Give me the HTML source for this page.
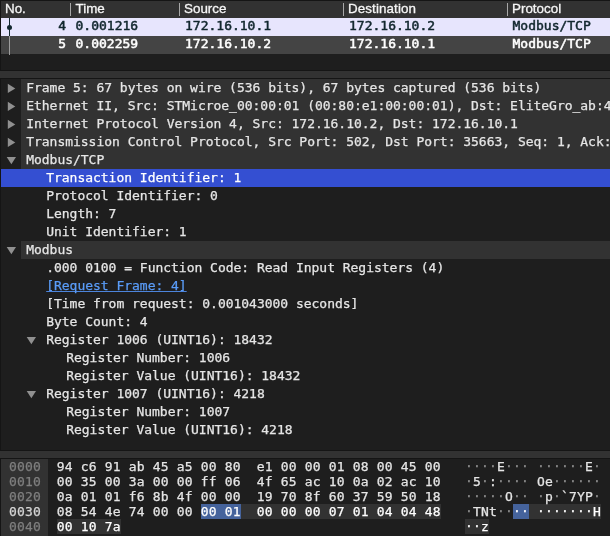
<!DOCTYPE html>
<html><head><meta charset="utf-8"><title>Wireshark Modbus/TCP</title>
<style>
html,body{margin:0;padding:0;background:#323232;}
body{will-change:transform;width:610px;height:536px;overflow:hidden;position:relative;font-family:"DejaVu Sans Mono","Liberation Mono",monospace;font-size:13px;color:#e6e6e6;}
.pane{position:absolute;left:0;width:610px;background:#1e1e1e;overflow:hidden;box-sizing:border-box;border-left:1px solid #151515;}
#list{top:0;height:71px;border-top:1px solid #151515;border-bottom:1px solid #151515;}
#hdr{position:absolute;left:0;top:0;width:610px;height:17px;background:#323232;font-family:"Liberation Sans",sans-serif;font-size:13.4px;color:#f6f6f6;-webkit-text-stroke:0.3px #f6f6f6;}
#hdr span{position:absolute;top:-1.4px;line-height:17px;white-space:nowrap;}
#hdr i{position:absolute;top:2px;width:1px;height:13px;background:#a8a8a8;}
.lr{position:absolute;left:0;width:610px;height:18px;line-height:18px;white-space:nowrap;}
.lr span{position:absolute;top:-1px;-webkit-text-stroke:0.5px currentColor;}
#r1{top:17px;background:#e7e5fd;color:#12272e;}
#r2{top:35px;background:#444444;color:#ffffff;}
#tree{top:78px;height:373px;border-top:1px solid #151515;border-bottom:1px solid #151515;}
.row{position:absolute;left:0;width:610px;height:18px;line-height:18px;white-space:nowrap;}
.row.top{background:#323232;}
.row.sel{background:#344fd2;color:#ffffff;}
.gut{position:absolute;left:0;top:0;width:20px;height:18px;background:#1e1e1e;}
.tx{position:absolute;top:0;letter-spacing:-0.022px;-webkit-text-stroke:0.25px currentColor;}
.ar{position:absolute;top:4px;fill:#909090;}
.ad{position:absolute;top:5px;fill:#909090;}
.lnk{color:#5a9cf8;text-decoration:underline;text-decoration-skip-ink:none;text-underline-offset:1px;text-decoration-thickness:1px;text-decoration-color:#4c84dc;}
#hex{top:458px;height:78px;border-top:1px solid #151515;}
#offbg{position:absolute;left:0;top:0;width:47px;height:80px;background:#323232;}
.hr{-webkit-text-stroke:0.25px currentColor;position:absolute;left:0;width:610px;height:15px;line-height:15px;white-space:pre;letter-spacing:0.174px;}
.hr span{position:absolute;top:0;height:15px;}
.of{left:8px;color:#7f7f7f;}
.of.cur{color:#d6d6d6;}
.h1{left:55.7px;} .h2{left:255.7px;} .a1{left:464px;} .a2{left:536px;}
b{font-weight:normal;}
u{text-decoration:none;color:#8e8e8e;position:relative;top:-0.6px;}
u.w{color:#ffffff;}
b.s{background:#45639c;color:#ffffff;}
b.w{color:#ffffff;}
.hl{position:absolute;background:#323232;height:15px;}
</style></head><body>
<div class="pane" id="list">
 <div id="hdr">
  <span style="left:4px">No.</span><i style="left:69px"></i>
  <span style="left:74.5px">Time</span><i style="left:178px"></i>
  <span style="left:183px">Source</span><i style="left:342px"></i>
  <span style="left:347px;letter-spacing:0.1px">Destination</span><i style="left:506px"></i>
  <span style="left:511px">Protocol</span>
 </div>
 <div class="lr" id="r1"><i style="position:absolute;left:8px;top:0;width:1px;height:18px;background:#12272e"></i><i style="position:absolute;left:6px;top:7px;width:5px;height:5px;border-radius:50%;background:#12272e"></i>
  <span style="left:0;width:65px;text-align:right">4</span><span style="left:74.5px">0.001216</span><span style="left:184px">172.16.10.1</span><span style="left:348px">172.16.10.2</span><span style="left:511.5px">Modbus/TCP</span></div>
 <div class="lr" id="r2"><i style="position:absolute;left:8px;top:0;width:1px;height:19px;background:#9c9c9c"></i>
  <span style="left:0;width:65px;text-align:right">5</span><span style="left:74.5px">0.002259</span><span style="left:184px">172.16.10.2</span><span style="left:348px">172.16.10.1</span><span style="left:511.5px">Modbus/TCP</span></div>
</div>
<div class="pane" id="tree">
<div class="row top" style="top:0px"><i class="gut"></i><svg class="ar" style="left:6px" width="10" height="12" viewBox="0 0 10 12"><path d="M0.8 0.8 L8.3 5.4 L0.8 10 Z"/></svg><span class="tx" style="left:25.2px">Frame 5: 67 bytes on wire (536 bits), 67 bytes captured (536 bits)</span></div>
<div class="row top" style="top:18px"><i class="gut"></i><svg class="ar" style="left:6px" width="10" height="12" viewBox="0 0 10 12"><path d="M0.8 0.8 L8.3 5.4 L0.8 10 Z"/></svg><span class="tx" style="left:25.2px">Ethernet II, Src: STMicroe_00:00:01 (00:80:e1:00:00:01), Dst: EliteGro_ab:45:a5 (94:c6:91:ab:45:a5)</span></div>
<div class="row top" style="top:36px"><i class="gut"></i><svg class="ar" style="left:6px" width="10" height="12" viewBox="0 0 10 12"><path d="M0.8 0.8 L8.3 5.4 L0.8 10 Z"/></svg><span class="tx" style="left:25.2px">Internet Protocol Version 4, Src: 172.16.10.2, Dst: 172.16.10.1</span></div>
<div class="row top" style="top:54px"><i class="gut"></i><svg class="ar" style="left:6px" width="10" height="12" viewBox="0 0 10 12"><path d="M0.8 0.8 L8.3 5.4 L0.8 10 Z"/></svg><span class="tx" style="left:25.2px">Transmission Control Protocol, Src Port: 502, Dst Port: 35663, Seq: 1, Ack: 13, Len: 13</span></div>
<div class="row top" style="top:72px"><i class="gut"></i><svg class="ad" style="left:5px" width="11" height="10" viewBox="0 0 11 10"><path d="M0.7 0.9 L10 0.9 L5.35 8.3 Z"/></svg><span class="tx" style="left:25.2px">Modbus/TCP</span></div>
<div class="row sel" style="top:90px"><span class="tx" style="left:45.2px">Transaction Identifier: 1</span></div>
<div class="row" style="top:108px"><span class="tx" style="left:45.2px">Protocol Identifier: 0</span></div>
<div class="row" style="top:126px"><span class="tx" style="left:45.2px">Length: 7</span></div>
<div class="row" style="top:144px"><span class="tx" style="left:45.2px">Unit Identifier: 1</span></div>
<div class="row top" style="top:162px"><i class="gut"></i><svg class="ad" style="left:5px" width="11" height="10" viewBox="0 0 11 10"><path d="M0.7 0.9 L10 0.9 L5.35 8.3 Z"/></svg><span class="tx" style="left:25.2px">Modbus</span></div>
<div class="row" style="top:180px"><span class="tx" style="left:45.2px">.000 0100 = Function Code: Read Input Registers (4)</span></div>
<div class="row" style="top:198px"><span class="tx" style="left:45.2px"><span class="lnk">[Request Frame: 4]</span></span></div>
<div class="row" style="top:216px"><span class="tx" style="left:45.2px">[Time from request: 0.001043000 seconds]</span></div>
<div class="row" style="top:234px"><span class="tx" style="left:45.2px">Byte Count: 4</span></div>
<div class="row" style="top:252px"><svg class="ad" style="left:25px" width="11" height="10" viewBox="0 0 11 10"><path d="M0.7 0.9 L10 0.9 L5.35 8.3 Z"/></svg><span class="tx" style="left:45.2px">Register 1006 (UINT16): 18432</span></div>
<div class="row" style="top:270px"><span class="tx" style="left:65.2px">Register Number: 1006</span></div>
<div class="row" style="top:288px"><span class="tx" style="left:65.2px">Register Value (UINT16): 18432</span></div>
<div class="row" style="top:306px"><svg class="ad" style="left:25px" width="11" height="10" viewBox="0 0 11 10"><path d="M0.7 0.9 L10 0.9 L5.35 8.3 Z"/></svg><span class="tx" style="left:45.2px">Register 1007 (UINT16): 4218</span></div>
<div class="row" style="top:324px"><span class="tx" style="left:65.2px">Register Number: 1007</span></div>
<div class="row" style="top:342px"><span class="tx" style="left:65.2px">Register Value (UINT16): 4218</span></div>
</div>
<div class="pane" id="hex">
 <div id="offbg"></div>
 <div class="hl" style="left:240px;top:45px;width:200px"></div>
 <div class="hl" style="left:528px;top:45px;width:72px"></div>
 <div class="hl" style="left:56px;top:60px;width:64px"></div>
 <div class="hl" style="left:464px;top:60px;width:24px"></div>
<div class="hr" style="top:0px"><span class="of">0000</span><span class="h1">94 c6 91 ab 45 a5 00 80</span><span class="h2">e1 00 00 01 08 00 45 00</span><span class="a1"><u>····</u>E<u>···</u></span><span class="a2"><u>······</u>E<u>·</u></span></div>
<div class="hr" style="top:15px"><span class="of">0010</span><span class="h1">00 35 00 3a 00 00 ff 06</span><span class="h2">4f 65 ac 10 0a 02 ac 10</span><span class="a1"><u>·</u>5<u>·</u>:<u>····</u></span><span class="a2">Oe<u>······</u></span></div>
<div class="hr" style="top:30px"><span class="of">0020</span><span class="h1">0a 01 01 f6 8b 4f 00 00</span><span class="h2">19 70 8f 60 37 59 50 18</span><span class="a1"><u>·····</u>O<u>··</u></span><span class="a2"><u>·</u>p<u>·</u>`7YP<u>·</u></span></div>
<div class="hr" style="top:45px"><span class="of cur">0030</span><span class="h1">08 54 4e 74 00 00 <b class="s">00 01</b></span><span class="h2"><b class="w">00 00 00 07 01 04 04 48</b></span><span class="a1"><u>·</u>TNt<u>··</u><b class="s"><u class="w">··</u></b></span><span class="a2"><u class="w">·······</u><b class="w">H</b></span></div>
<div class="hr" style="top:60px"><span class="of">0040</span><span class="h1"><b class="w">00 10 7a</b></span><span class="h2"></span><span class="a1"><u class="w">··</u><b class="w">z</b></span><span class="a2"></span></div>
</div>
</body></html>
